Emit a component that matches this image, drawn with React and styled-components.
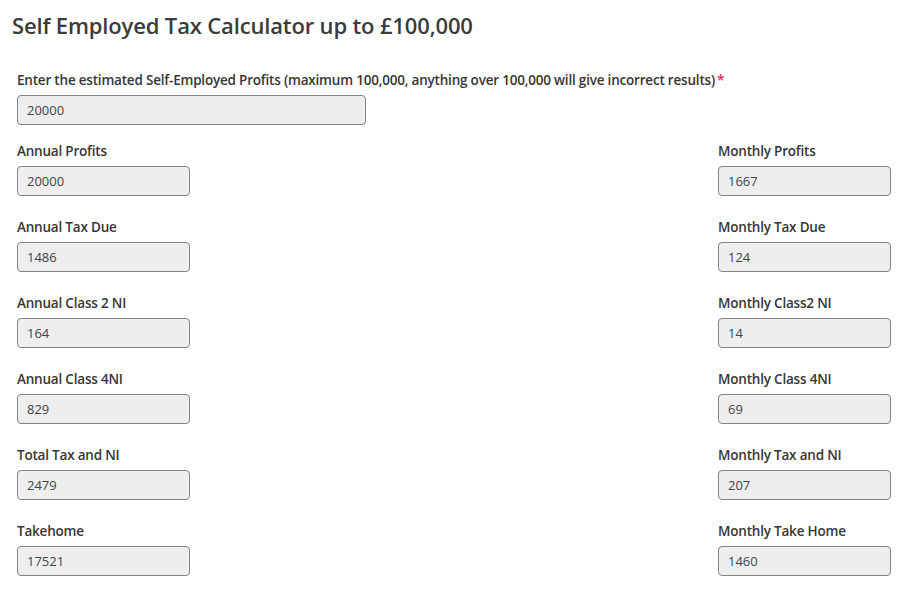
import React, { useState } from "react";
import styled, { createGlobalStyle } from "styled-components";

const GlobalStyle = createGlobalStyle`
  body {
    margin: 0;
    background: #ffffff;
    font-family: "Open Sans", "Segoe UI", sans-serif;
    color: #363636;
  }
`;

const rows = [
  ["Annual Profits", "Monthly Profits", "annual", "monthly"],
  ["Annual Tax Due", "Monthly Tax Due", "tax", "taxM"],
  ["Annual Class 2 NI", "Monthly Class2 NI", "c2", "c2M"],
  ["Annual Class 4NI", "Monthly Class 4NI", "c4", "c4M"],
  ["Total Tax and NI", "Monthly Tax and NI", "total", "totalM"],
  ["Takehome", "Monthly Take Home", "take", "takeM"],
];

// rough 2019-ish self employed rates, good enough up to 100k
const calc = (profit) => {
  const p = Math.min(Number(profit) || 0, 100000);
  const tax = Math.max(0, p - 12570) * 0.2;
  const c2 = p > 12570 ? 164 : 0;
  const c4 =
    Math.max(0, Math.min(p, 50270) - 10788) * 0.09 +
    Math.max(0, p - 50270) * 0.02;
  const total = Math.round(tax) + Math.round(c2) + Math.round(c4);
  const r = Math.round;
  return {
    annual: r(p), monthly: r(p / 12),
    tax: r(tax), taxM: r(tax / 12),
    c2: r(c2), c2M: r(c2 / 12),
    c4: r(c4), c4M: r(c4 / 12),
    total: total, totalM: r(total / 12),
    take: r(p) - total, takeM: r((p - total) / 12),
  };
};

const App = () => {
  const [profit, setProfit] = useState("20000");
  const v = calc(profit);

  return (
    <Page>
      <GlobalStyle />
      <Title>Self Employed Tax Calculator up to £100,000</Title>
      <Form>
        <Field>
          <Label>
            Enter the estimated Self-Employed Profits (maximum 100,000, anything over 100,000 will give incorrect results)
            <Required>*</Required>
          </Label>
          <Input wide value={profit} onChange={(e) => setProfit(e.target.value)} />
        </Field>
        {rows.map(([left, right, lk, rk]) => (
          <Row key={lk}>
            <Field>
              <Label>{left}</Label>
              <Input readOnly value={v[lk]} />
            </Field>
            <Field>
              <Label>{right}</Label>
              <Input readOnly value={v[rk]} />
            </Field>
          </Row>
        ))}
      </Form>
    </Page>
  );
};

export default App;

const Page = styled.div`
  padding: 12px 25px 20px 12px;
`;

const Title = styled.h2`
  margin: 0;
  font-size: 22px;
  line-height: 26px;
  font-weight: 600;
  letter-spacing: -0.15px;
  color: #3b3b3b;
`;

const Form = styled.form`
  padding: 32px 0 0 5px;
  display: flex;
  flex-direction: column;
  gap: 16px;
`;

const Row = styled.div`
  display: flex;
  justify-content: space-between;

  & + & {
    margin-top: 5px;
  }
`;

const Field = styled.div`
  display: flex;
  flex-direction: column;
  align-items: flex-start;
`;

const Label = styled.label`
  font-size: 13.5px;
  line-height: 20px;
  font-weight: 600;
  letter-spacing: -0.2px;
  color: #363636;
  margin-bottom: 5px;
`;

const Required = styled.span`
  color: #e0245e;
  margin-left: 2px;
`;

const Input = styled.input`
  box-sizing: border-box;
  width: ${(p) => (p.wide ? "349px" : "173px")};
  height: 30px;
  padding: 0 9px;
  border: 1px solid #7d848c;
  border-radius: 4px;
  background: #eeeeee;
  font-family: "Open Sans", sans-serif;
  font-size: 13px;
  color: #444;
  outline: none;
`;
